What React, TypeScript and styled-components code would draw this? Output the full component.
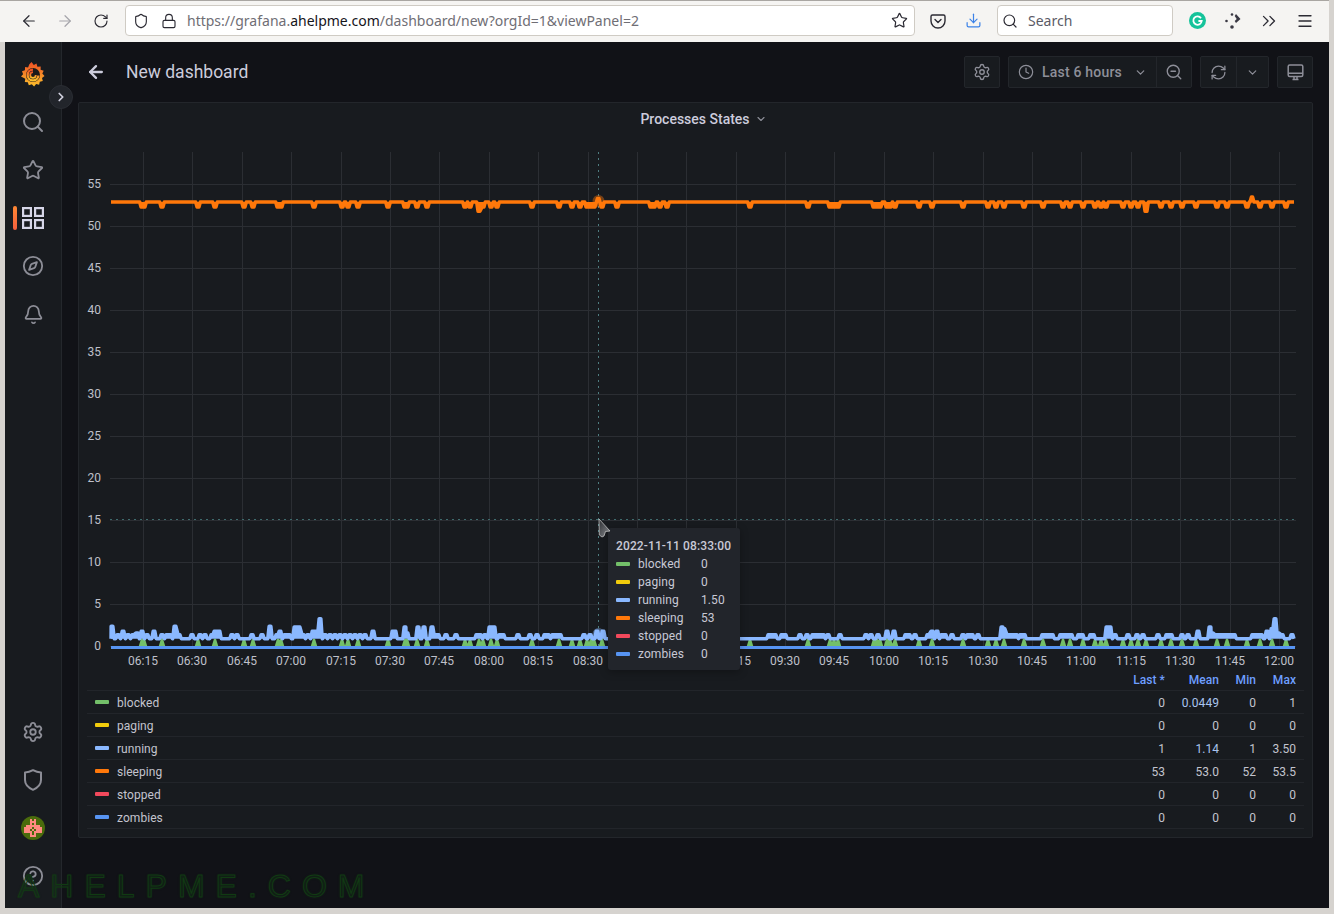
import React from "react";
import styled, { createGlobalStyle } from "styled-components";
import {
  ArrowLeft, ArrowRight, RotateCw, Shield, Lock, Star, Download, Search, ChevronsRight, Menu,
  Compass, Bell, Settings, CircleHelp, Clock, ZoomOut, RefreshCw, ChevronDown, ChevronRight,
} from "lucide-react";

const GlobalStyle = createGlobalStyle`
  html, body { margin: 0; padding: 0; background: #d6d3cf; }
  * { box-sizing: border-box; }
  body { font-family: Roboto, "Liberation Sans", sans-serif; }
`;

const Frame = styled.div`
  position: relative;
  width: 1334px;
  height: 914px;
  background: #d6d3cf;
  display: flex;
  flex-direction: column;
  overflow: hidden;
`;
const BrowserBar = styled.div`
  height: 42px;
  margin-right: 5px;
  background: #f5f4f2;
  border-top: 1px solid #a9a6a2;
  display: flex;
  align-items: center;
  padding: 0 0 2px 11px;
  color: #2b2a33;
`;
const Slot = styled.div<{ $w?: number; $muted?: boolean; $color?: string }>`
  width: ${(p) => p.$w ?? 36}px;
  height: 29px;
  flex: none;
  display: flex;
  align-items: center;
  justify-content: center;
  color: ${(p) => p.$color ?? (p.$muted ? "#a5a4aa" : "#2b2a33")};
`;
const Field = styled.div<{ $w: number; $ml: number }>`
  width: ${(p) => p.$w}px;
  margin-left: ${(p) => p.$ml}px;
  height: 31px;
  flex: none;
  background: #fff;
  border: 1px solid #cfcbc4;
  border-radius: 4px;
  display: flex;
  align-items: center;
  font-family: "Noto Sans", sans-serif;
  font-size: 14px;
`;
const Url = styled.div`
  flex: 1;
  margin-left: 5px;
  color: #6f6e75;
  white-space: nowrap;
  b { font-weight: 400; color: #15141a; }
`;
const SearchText = styled.span`
  margin-left: 6px;
  color: #5b5b66;
`;
const Body = styled.div`
  flex: 1;
  display: flex;
  margin: 0 5px 6px 5px;
  min-height: 0;
`;
const Sidebar = styled.nav`
  position: relative;
  width: 57px;
  flex: none;
  background: #181b1f;
  border-right: 1px solid #24272c;
  padding: 8px 0;
  display: flex;
  flex-direction: column;
  color: #8c8d96;
`;
const NavItem = styled.div<{ $active?: boolean }>`
  position: relative;
  height: 48px;
  width: 56px;
  display: flex;
  align-items: center;
  justify-content: center;
  color: ${(p) => (p.$active ? "#d6d6e8" : "inherit")};
  ${(p) =>
    p.$active &&
    `&::before {
      content: "";
      position: absolute;
      left: 8px;
      top: 12px;
      width: 4px;
      height: 24px;
      border-radius: 2px;
      background: linear-gradient(0deg, #f55f3e, #ff8833);
    }`}
`;
const Spacer = styled.div`
  flex: 1;
`;
const Toggle = styled.div`
  position: absolute;
  left: 44px;
  top: 43px;
  width: 24px;
  height: 24px;
  border-radius: 50%;
  background: #22252b;
  border: 1px solid #2a2d33;
  color: #d0d0de;
  display: flex;
  align-items: center;
  justify-content: center;
  z-index: 2;
`;
const Main = styled.main`
  flex: 1;
  min-width: 0;
  background: #111217;
  padding: 14px 16px 0;
  display: flex;
  flex-direction: column;
`;
const PageHeader = styled.header`
  height: 32px;
  margin-bottom: 14px;
  display: flex;
  align-items: center;
`;
const BackLink = styled.div`
  width: 20px;
  margin-left: 8px;
  color: #ccccdc;
  display: flex;
  justify-content: center;
`;
const Title = styled.h1`
  margin: 0 0 0 20px;
  flex: 1;
  font-size: 17.5px;
  font-weight: 400;
  line-height: 32px;
  color: #ccccdc;
`;
const Group = styled.div`
  display: flex;
  height: 32px;
  margin-left: 8px;
  background: #181b1f;
  border: 1px solid #23262b;
  border-radius: 2px;
`;
const ToolButton = styled.div<{ $w: number; $divided?: boolean }>`
  width: ${(p) => p.$w}px;
  display: flex;
  align-items: center;
  justify-content: center;
  color: #8e8f99;
  font-size: 14px;
  font-weight: 500;
  border-left: ${(p) => (p.$divided ? "1px solid #23262b" : "none")};
`;
const RangeLabel = styled.span`
  margin: 0 12px 0 8px;
  white-space: nowrap;
  letter-spacing: 0.2px;
`;
const Panel = styled.section`
  position: relative;
  height: 736px;
  background: #181b1f;
  border: 1px solid #23262b;
  border-radius: 2px;
`;
const PanelTitle = styled.div`
  height: 33px;
  display: flex;
  align-items: center;
  justify-content: center;
  font-size: 14px;
  font-weight: 500;
  color: #ccccdc;
  gap: 5px;
  padding: 0 0 1px 16px;
  svg { color: #8e8f99; }
`;
const ChartSvg = styled.svg`
  display: block;
  margin-top: 4px;
`;
const AxisText = styled.text`
  font-family: Roboto, "Liberation Sans", sans-serif;
  font-size: 12px;
  fill: #bfc0ca;
`;
const Legend = styled.div`
  margin: 0 8px;
  font-size: 12px;
  letter-spacing: 0.05px;
`;
const LegendRow = styled.div<{ $head?: boolean }>`
  display: grid;
  grid-template-columns: 1fr 56px 54px 37px 40px;
  padding-right: 8px;
  align-items: center;
  height: ${(p) => (p.$head ? 18 : 23)}px;
  color: ${(p) => (p.$head ? "#6e9fff" : "#c3c4ce")};
  font-weight: ${(p) => (p.$head ? 500 : 400)};
  border-bottom: 1px solid #22252a;
  padding-bottom: ${(p) => (p.$head ? 4 : 0)}px;
  padding-top: ${(p) => (p.$head ? 0 : 2)}px;
`;
const Name = styled.div`
  display: flex;
  align-items: center;
  padding-left: 8px;
  gap: 8px;
`;
const Swatch = styled.i<{ $c: string }>`
  width: 14px;
  height: 4px;
  border-radius: 1px;
  background: ${(p) => p.$c};
  display: block;
  flex: none;
`;
const LegendSwatch = styled(Swatch)`
  margin-top: -3px;
`;
const Num = styled.div<{ $blue?: boolean }>`
  text-align: right;
  color: ${(p) => (p.$blue ? "#a9c4ee" : "inherit")};
`;
const Tooltip = styled.div`
  position: absolute;
  left: 529px;
  top: 425px;
  width: 132px;
  height: 142px;
  background: #22252b;
  border-radius: 3px;
  padding: 9px 8px;
  font-size: 12px;
  color: #c8c9d6;
  box-shadow: 0 2px 8px rgba(0, 0, 0, 0.3);
`;
const TipDate = styled.div`
  font-weight: 500;
  line-height: 18px;
  white-space: nowrap;
  letter-spacing: 0.12px;
`;
const TipRow = styled.div`
  display: grid;
  grid-template-columns: 14px 55px auto;
  column-gap: 8px;
  align-items: center;
  height: 18px;
  letter-spacing: 0.08px;
`;
const Pointer = styled.svg`
  position: absolute;
  left: 519px;
  top: 415px;
  z-index: 3;
`;
const Watermark = styled.div`
  position: absolute;
  left: 18px;
  top: 864px;
  font-family: "Liberation Sans", sans-serif;
  font-size: 32px;
  line-height: 44px;
  letter-spacing: 11px;
  color: transparent;
  -webkit-text-stroke: 1px #113a13;
  text-shadow: 0 0 3px rgba(20, 110, 20, 0.22);
  pointer-events: none;
  white-space: nowrap;
`;

/* ---------- data ---------- */
const dips = [
  142, 144, 162, 198, 215, 244, 253, 278, 281, 314, 342, 348, 358, 388, 405, 407, 417, 427, 465, 470, 479, 483, 491, 497,
  532, 559, 572, 580, 587, 591, 594, 602, 617, 651, 654, 660, 667, 750, 808, 830, 834, 838, 874, 877, 880, 887, 890, 895,
  919, 932, 963, 988, 996, 1004, 1024, 1043, 1063, 1070, 1083, 1095, 1101, 1106, 1123, 1131, 1138, 1146, 1161, 1171, 1182,
  1196, 1217, 1227, 1247, 1260, 1272, 1286,
];
const spikes: [number, number][] = [
  [112, 2.5], [118, 1.5], [123, 1.9], [128, 1.5], [133, 1.5], [137, 1.7], [142, 1.9], [147, 1.5], [154, 1.9], [162, 1.5],
  [167, 1.5], [170, 1.5], [175, 2.5], [179, 1.5], [192, 1.5], [200, 1.5], [205, 1.5], [212, 1.5], [215, 1.9], [219, 1.9],
  [232, 1.5], [237, 1.5], [252, 1.5], [262, 1.5], [270, 2.5], [277, 1.5], [280, 1.9], [285, 1.5], [289, 1.5], [295, 2.4],
  [299, 2.4], [303, 1.5], [308, 1.5], [313, 1.9], [317, 1.9], [320, 3.4], [325, 1.5], [330, 1.5], [335, 1.5], [340, 1.5],
  [345, 1.5], [350, 1.5], [355, 1.5], [360, 1.5], [365, 1.5], [373, 1.9], [393, 1.9], [395, 1.9], [405, 2.4], [407, 1.7],
  [418, 2.4], [424, 2.4], [432, 2.4], [435, 1.5], [438, 1.5], [446, 1.5], [456, 1.5], [477, 1.5], [480, 1.5], [485, 1.5],
  [490, 2.4], [494, 2.4], [500, 1.5], [503, 1.5], [518, 1.5], [530, 1.5], [537, 1.5], [545, 1.5], [548, 1.5], [553, 1.5],
  [557, 1.5], [560, 1.5], [584, 1.5], [590, 1.5], [597, 1.9], [603, 1.9], [769, 1.5], [772, 1.5], [775, 1.5], [782, 1.5],
  [785, 1.5], [800, 1.5], [807, 1.5], [813, 1.5], [816, 1.5], [820, 1.5], [823, 1.5], [828, 1.5], [840, 1.5], [866, 1.5],
  [871, 1.5], [878, 1.5], [887, 1.9], [894, 1.9], [906, 1.5], [909, 1.5], [915, 1.5], [928, 1.5], [932, 1.9], [937, 1.9],
  [942, 1.5], [945, 1.5], [952, 1.5], [963, 1.5], [968, 1.5], [972, 1.5], [978, 1.5], [1002, 2.4], [1004, 2.2],
  [1107, 2.4], [1110, 2.4], [1115, 1.5], [1128, 1.5], [1137, 1.5], [1143, 1.5], [1158, 1.5], [1167, 1.5], [1171, 1.5],
  [1182, 1.5], [1188, 1.5], [1198, 1.9], [1210, 2.4], [1212, 1.7], [1267, 1.9], [1272, 2.2], [1275, 3.4], [1278, 1.7], [1282, 1.5], [1292, 1.5],
];
const plateaus: [number, number][] = [
  [1007, 1017], [1020, 1025], [1042, 1053], [1060, 1072], [1078, 1083], [1090, 1094], [1215, 1235], [1252, 1262],
];

type Bump = { a: number; b: number; v: number };
const XA = 111;
const XB = 1294;
const sy = (v: number) => 647.2 - v * 8.4;

/* A series that rests on a base value with flat-topped bumps. */
const bumpPath = (base: number, bumps: Bump[], ramp = 1.4) => {
  const sorted = [...bumps].sort((p, q) => p.a - q.a);
  const baseY = sy(base).toFixed(1);
  let d = `M${XA} ${baseY}`;
  sorted.forEach((k, i) => {
    const prevEnd = i ? sorted[i - 1].b : XA;
    const nextStart = i < sorted.length - 1 ? sorted[i + 1].a : XB;
    if (k.a - prevEnd > ramp * 2) d += `L${(k.a - ramp).toFixed(1)} ${baseY}`;
    d += `L${k.a.toFixed(1)} ${sy(k.v).toFixed(1)}L${k.b.toFixed(1)} ${sy(k.v).toFixed(1)}`;
    if (nextStart - k.b > ramp * 2) d += `L${(k.b + ramp).toFixed(1)} ${baseY}`;
  });
  return `${d}L${XB} ${baseY}`;
};

const runningBumps: Bump[] = [
  ...spikes.map(([x, v]) => ({ a: x - 0.9, b: x + 0.9, v })),
  ...plateaus.map(([a, b]) => ({ a, b, v: 1.5 })),
];
const sleepingBumps: Bump[] = [
  ...dips.map((x) => ({ a: x - 0.9, b: x + 0.9, v: x === 479 || x === 1146 ? 51.9 : 52.4 })),
  { a: 1251.5, b: 1252.5, v: 53.6 },
  { a: 597.5, b: 599, v: 53.4 },
];
const runningPath = bumpPath(1, runningBumps);
const sleepingPath = bumpPath(53, sleepingBumps);
const blockedPath = dips.map((x) => `M${x - 3.5} 647L${x - 1} ${sy(1)}L${x + 1} ${sy(1)}L${x + 3.5} 647Z`).join("");

const times = [
  "06:15", "06:30", "06:45", "07:00", "07:15", "07:30", "07:45", "08:00", "08:15", "08:30", "", "", "09:15",
  "09:30", "09:45", "10:00", "10:15", "10:30", "10:45", "11:00", "11:15", "11:30", "11:45", "12:00",
];
const gridX = (i: number) => Math.round(143 + i * 49.39) + 0.5;
const ticks = [0, 5, 10, 15, 20, 25, 30, 35, 40, 45, 50, 55];
const lineY = (t: number) => Math.round(646 - t * 8.4) + 0.5;

const series = [
  { name: "blocked", color: "#73bf69", last: "0", mean: "0.0449", min: "0", max: "1", tip: "0" },
  { name: "paging", color: "#f2cc0c", last: "0", mean: "0", min: "0", max: "0", tip: "0" },
  { name: "running", color: "#8ab8ff", last: "1", mean: "1.14", min: "1", max: "3.50", tip: "1.50" },
  { name: "sleeping", color: "#ff780a", last: "53", mean: "53.0", min: "52", max: "53.5", tip: "53" },
  { name: "stopped", color: "#f2495c", last: "0", mean: "0", min: "0", max: "0", tip: "0" },
  { name: "zombies", color: "#5794f2", last: "0", mean: "0", min: "0", max: "0", tip: "0" },
];

/* ---------- drawings ---------- */
const GrafanaLogo = () => (
  <svg width="24" height="26" viewBox="0 0 24 26">
    <defs>
      <linearGradient id="gf" x1="0" y1="1" x2="0" y2="0">
        <stop offset="0" stopColor="#fcc02c" />
        <stop offset="1" stopColor="#ef4f24" />
      </linearGradient>
    </defs>
    <path
      fill="url(#gf)"
      d="M10.500 1l2.300 3 2.700-1.600.9 3.300 3.300-.3-.1 3.300 3.100 1-1.400 2.900 2.200 2.300-2.500 2 .8 3-3 .8-.7 3-3-.7-2 2.400-2.300-2.100-3 1-1-3-3-.4.500-3.100L0 15.500l2.100-2.300L1 10.300l2.900-1.100.2-3.200 3 .4L8.200 3.500z"
    />
    <circle cx="12" cy="14" r="7" fill="#1d1a1a" />
    <path d="M12 8.600a5.400 5.400 0 1 0 5.400 5.900" fill="none" stroke="url(#gf)" strokeWidth="2.400" />
    <path d="M14.800 14a2.800 2.800 0 1 1-2.800-2.800" fill="none" stroke="url(#gf)" strokeWidth="1.800" />
  </svg>
);
const DashIcon = () => (
  <svg width="22" height="22" viewBox="0 0 22 22" fill="none" stroke="currentColor" strokeWidth="2.200">
    <rect x="1.100" y="1.100" width="7.800" height="7.800" />
    <rect x="13.100" y="1.100" width="7.800" height="7.800" />
    <rect x="1.100" y="13.100" width="7.800" height="7.800" />
    <rect x="13.100" y="13.100" width="7.800" height="7.800" />
  </svg>
);
const ShieldIcon = () => (
  <svg width="20" height="22" viewBox="0 0 20 22" fill="none" stroke="currentColor" strokeWidth="2" strokeLinejoin="round">
    <path d="M2 3.500c3 0 5.500-.8 8-2.300 2.500 1.500 5 2.300 8 2.300V11c0 4.500-3.500 7.800-8 9.800C5.500 18.800 2 15.500 2 11z" />
  </svg>
);
const TvIcon = () => (
  <svg width="17" height="17" viewBox="0 0 17 17" fill="none" stroke="currentColor" strokeWidth="1.500" strokeLinejoin="round">
    <rect x="1.200" y="1" width="14.600" height="11.500" rx="1.500" />
    <path d="M1.200 9.300h14.600M5.500 15.500h6M7 12.500v3M10 12.500v3" />
  </svg>
);
const Avatar = () => {
  const rows = ["...#.#...", "...###...", "...#.#...", ".#######.", "####.####", "###.#.###", "####.####", "...#.#...", "...###..."];
  return (
    <svg width="24" height="24" viewBox="0 0 24 24" shapeRendering="crispEdges">
      <circle cx="12" cy="12" r="12" fill="#4a6b0c" shapeRendering="auto" />
      {rows.flatMap((r, y) =>
        r.split("").map((c, x) => (c === "#" ? <rect key={`${x}-${y}`} x={3 + x * 2} y={3 + y * 2} width="2" height="2" fill="#ff8a80" /> : null)),
      )}
    </svg>
  );
};
const PocketIcon = () => (
  <svg width="16" height="16" viewBox="0 0 16 16" fill="none" stroke="currentColor" strokeWidth="1.400" strokeLinecap="round" strokeLinejoin="round">
    <path d="M2.500 2h11A1.500 1.500 0 0 1 15 3.500V8a7 7 0 0 1-14 0V3.500A1.500 1.500 0 0 1 2.500 2z" />
    <path d="M5 6.500l3 3 3-3" />
  </svg>
);
const GrammarlyIcon = () => (
  <svg width="17" height="17" viewBox="0 0 17 17">
    <circle cx="8.500" cy="8.500" r="8.500" fill="#15c39a" />
    <path d="M12 6.200A4.200 4.200 0 1 0 12.700 9H9.400" fill="none" stroke="#fff" strokeWidth="1.800" />
  </svg>
);
const DotsIcon = () => (
  <svg width="18" height="18" viewBox="0 0 18 18" fill="#3a3944">
    <circle cx="8" cy="2.500" r="1.300" />
    <circle cx="2.500" cy="9" r="1.300" />
    <circle cx="8" cy="15" r="1.800" />
    <path d="M12 2l4.500 5L12 11l-1.300-2 2-2-2-3z" />
  </svg>
);

const Chart = () => (
  <ChartSvg width="1233" height="533" viewBox="79 140 1233 533">
    {ticks.map((t) => (
      <g key={t}>
        <line x1="110" x2="1296" y1={lineY(t)} y2={lineY(t)} stroke="#2b2e33" />
        <AxisText x="101" y={646 - t * 8.4 + 4} textAnchor="end">
          {t}
        </AxisText>
      </g>
    ))}
    {times.map((t, i) => (
      <g key={i}>
        <line x1={gridX(i)} x2={gridX(i)} y1="152" y2="646" stroke="#2b2e33" />
        {t && (
          <AxisText x={gridX(i) - 0.5} y="665" textAnchor="middle">
            {t}
          </AxisText>
        )}
      </g>
    ))}
    <line x1="110" x2="1296" y1="519.500" y2="519.500" stroke="#3f6b6d" strokeDasharray="2 4" />
    <line x1="598.500" x2="598.500" y1="152" y2="646" stroke="#4f7d80" strokeDasharray="2 4" />
    <path d={blockedPath} fill="#73bf69" />
    <path d={runningPath} fill="#8ab8ff" stroke="#8ab8ff" strokeWidth="3.400" strokeLinejoin="round" />
    <path d={sleepingPath} fill="#ff780a" stroke="#ff780a" strokeWidth="3.600" strokeLinejoin="round" />
    <path d={`M${XA} 647.500L${XB + 1} 647.500`} fill="none" stroke="#5794f2" strokeWidth="3" />
    <circle cx="598.500" cy="201" r="6" fill="#ff780a" fillOpacity="0.4" />
    <circle cx="598.500" cy="634" r="6" fill="#8ab8ff" fillOpacity="0.4" />
  </ChartSvg>
);

export default function App() {
  return (
    <Frame>
      <GlobalStyle />
      <BrowserBar>
        <Slot><ArrowLeft size={18} strokeWidth={1.6} /></Slot>
        <Slot $muted><ArrowRight size={18} strokeWidth={1.6} /></Slot>
        <Slot><RotateCw size={16} strokeWidth={1.7} /></Slot>
        <Field $w={790} $ml={6}>
          <Slot $w={30}><Shield size={16} strokeWidth={1.7} /></Slot>
          <Slot $w={26}><Lock size={16} strokeWidth={1.7} /></Slot>
          <Url>https://grafana.<b>ahelpme.com</b>/dashboard/new?orgId=1&amp;viewPanel=2</Url>
          <Slot $w={30}><Star size={17} strokeWidth={1.7} /></Slot>
        </Field>
        <Slot $w={46}><PocketIcon /></Slot>
        <Slot $w={24} $color="#3b82e8"><Download size={17} strokeWidth={1.7} /></Slot>
        <Field $w={176} $ml={12}>
          <Slot $w={24}><Search size={16} strokeWidth={1.8} /></Slot>
          <SearchText>Search</SearchText>
        </Field>
        <Slot $w={48}><GrammarlyIcon /></Slot>
        <Slot $w={24}><DotsIcon /></Slot>
        <Slot $w={48}><ChevronsRight size={22} strokeWidth={1.4} /></Slot>
        <Slot $w={24}><Menu size={18} strokeWidth={1.7} /></Slot>
      </BrowserBar>
      <Body>
        <Sidebar>
          <NavItem><GrafanaLogo /></NavItem>
          <Toggle><ChevronRight size={14} strokeWidth={3} /></Toggle>
          <NavItem><Search size={24} strokeWidth={2} /></NavItem>
          <NavItem><Star size={22} strokeWidth={2} /></NavItem>
          <NavItem $active><DashIcon /></NavItem>
          <NavItem><Compass size={22} strokeWidth={2} /></NavItem>
          <NavItem><Bell size={21} strokeWidth={2} /></NavItem>
          <Spacer />
          <NavItem><Settings size={22} strokeWidth={2} /></NavItem>
          <NavItem><ShieldIcon /></NavItem>
          <NavItem><Avatar /></NavItem>
          <NavItem><CircleHelp size={22} strokeWidth={2} /></NavItem>
        </Sidebar>
        <Main>
          <PageHeader>
            <BackLink><ArrowLeft size={26} strokeWidth={2.8} /></BackLink>
            <Title>New dashboard</Title>
            <Group><ToolButton $w={34}><Settings size={18} strokeWidth={1.8} /></ToolButton></Group>
            <Group>
              <ToolButton $w={147}>
                <Clock size={16} strokeWidth={1.8} />
                <RangeLabel>Last 6 hours</RangeLabel>
                <ChevronDown size={13} strokeWidth={2.2} />
              </ToolButton>
              <ToolButton $w={35} $divided><ZoomOut size={18} strokeWidth={1.8} /></ToolButton>
            </Group>
            <Group>
              <ToolButton $w={35}><RefreshCw size={17} strokeWidth={1.8} /></ToolButton>
              <ToolButton $w={32} $divided><ChevronDown size={13} strokeWidth={2.2} /></ToolButton>
            </Group>
            <Group><ToolButton $w={34}><TvIcon /></ToolButton></Group>
          </PageHeader>
          <Panel>
            <PanelTitle>
              Processes States
              <ChevronDown size={12} strokeWidth={2.2} />
            </PanelTitle>
            <Chart />
            <Legend>
              <LegendRow $head>
                <div />
                <Num>Last *</Num>
                <Num>Mean</Num>
                <Num>Min</Num>
                <Num>Max</Num>
              </LegendRow>
              {series.map((s) => (
                <LegendRow key={s.name}>
                  <Name><LegendSwatch $c={s.color} />{s.name}</Name>
                  <Num>{s.last}</Num>
                  <Num $blue={s.mean === "0.0449" || s.mean === "1.14"}>{s.mean}</Num>
                  <Num>{s.min}</Num>
                  <Num>{s.max}</Num>
                </LegendRow>
              ))}
            </Legend>
            <Tooltip>
              <TipDate>2022-11-11 08:33:00</TipDate>
              {series.map((s) => (
                <TipRow key={s.name}>
                  <Swatch $c={s.color} />
                  <span>{s.name}</span>
                  <span>{s.tip}</span>
                </TipRow>
              ))}
            </Tooltip>
            <Pointer width="14" height="22" viewBox="0 0 14 22">
              <defs>
                <linearGradient id="ptr" x1="0" y1="0" x2="1" y2="1">
                  <stop offset="0" stopColor="#2a2c30" />
                  <stop offset="1" stopColor="#8a8c90" />
                </linearGradient>
              </defs>
              <path d="M1 1l11 12-4.500.5L6 18l-2 1L1.300 17z" fill="url(#ptr)" stroke="#d0d0d0" strokeWidth="0.700" />
            </Pointer>
          </Panel>
        </Main>
      </Body>
      <Watermark>AHELPME.COM</Watermark>
    </Frame>
  );
}
